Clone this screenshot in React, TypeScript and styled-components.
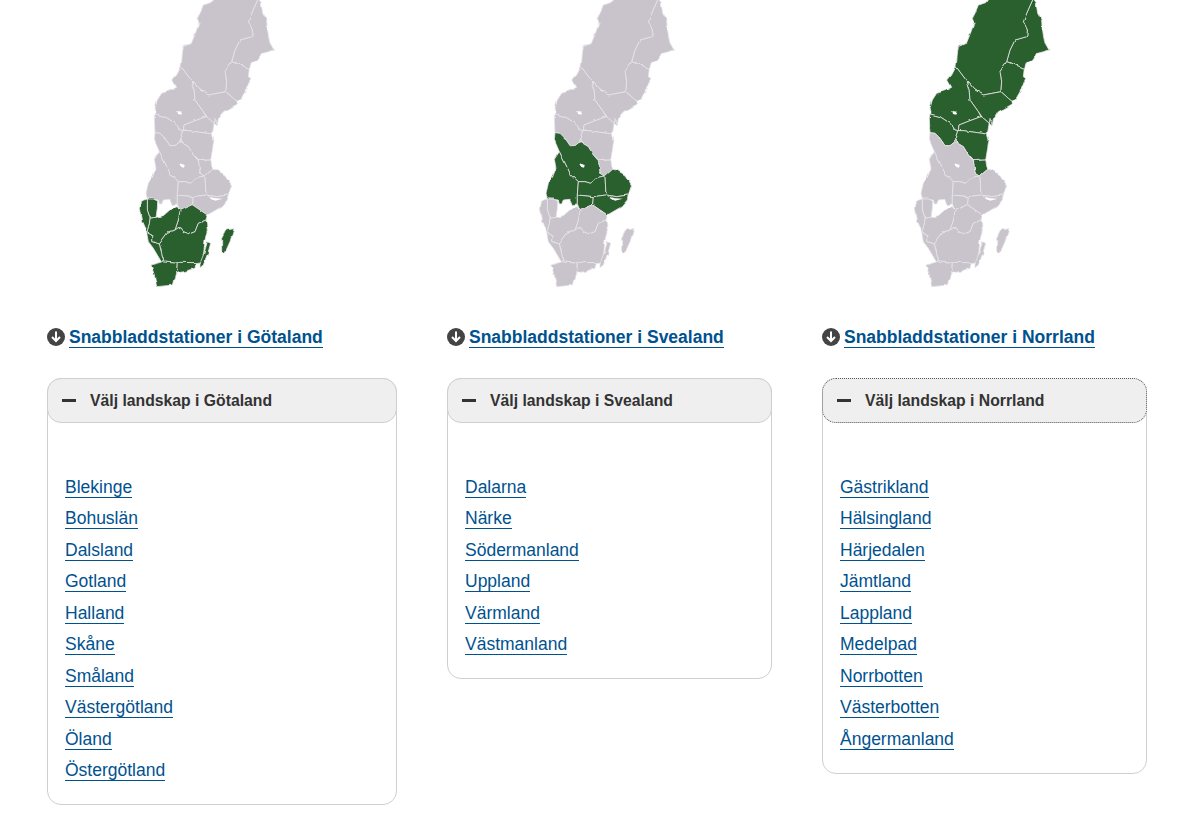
import React from "react";
import styled, { createGlobalStyle } from "styled-components";

type Group = "g" | "s" | "n";

const GlobalStyle = createGlobalStyle`
  html, body { margin: 0; padding: 0; background: #fff; }
  body { font-family: "Liberation Sans", Arial, sans-serif; }
`;

const Page = styled.main`
  display: flex;
  align-items: flex-start;
  gap: 50px;
  padding: 0 0 10px 47px;
`;

const Column = styled.section<{ $width: number }>`
  width: ${(p) => p.$width}px;
  flex: none;
`;

const MapSvg = styled.svg<{ $shift: number }>`
  display: block;
  width: 160px;
  height: 295px;
  margin-left: ${(p) => p.$shift}px;
`;

const Heading = styled.h2`
  display: flex;
  align-items: center;
  gap: 4px;
  margin: 27px 0 0;
  height: 30px;
  font-size: 17.5px;
  font-weight: 700;
  line-height: 30px;
`;

const HeadingLink = styled.a`
  color: #00528f;
  text-decoration: none;
  border-bottom: 1px solid #00528f;
  line-height: 20px;
`;

const Panel = styled.div`
  margin-top: 26px;
  border: 1px solid #cfcfcf;
  border-radius: 14px;
  background: #fff;
`;

const PanelHeader = styled.div<{ $focused?: boolean }>`
  display: flex;
  align-items: center;
  gap: 14px;
  box-sizing: border-box;
  height: 45px;
  margin: -1px;
  padding-left: 14px;
  background: #efefef;
  border: 1px solid #cfcfcf;
  border-radius: 14px;
  font-size: 15.75px;
  font-weight: 700;
  color: #333;
  ${(p) => (p.$focused ? "border: 1px dotted #555;" : "")}
`;

const Minus = styled.span`
  display: block;
  width: 14px;
  height: 3px;
  background: #333;
`;

const LinkList = styled.ul`
  list-style: none;
  margin: 0;
  padding: 49.5px 17px 17.5px;
`;

const LinkItem = styled.li`
  height: 31.5px;
  line-height: 31.5px;
  font-size: 17.5px;
`;

const PlainLink = styled.a`
  color: #00528f;
  text-decoration: none;
  border-bottom: 1px solid #00528f;
`;

const regions: { g: Group; p: string }[] = [
  // Norrbotten
  { g: "n", p: "415,-5 423,8 428,40 440,62 442,85 448,125 462,150 425,160 412,180 395,185 388,205 335,185 345,150 360,120 395,110 397,90 385,65 395,40" },
  // Lappland
  { g: "n", p: "283,-5 415,-5 395,40 385,65 397,90 395,110 360,120 345,150 335,185 315,215 320,240 318,275 265,285 240,270 213,240 183,200 187,165 190,140 215,128 228,95 237,70 232,55 240,40 250,15 275,8" },
  // Västerbotten
  { g: "n", p: "335,185 388,205 385,230 392,235 378,270 362,298 352,305 340,295 318,275 320,240 315,215" },
  // Ångermanland
  { g: "n", p: "213,240 240,270 265,285 318,275 340,295 352,305 352,312 330,325 310,335 295,360 292,378 262,352 250,335 225,300 222,270" },
  // Jämtland
  { g: "n", p: "183,200 213,240 222,270 225,300 250,335 258,350 225,362 192,375 190,392 180,390 165,370 135,350 105,342 108,340 105,325 112,300 125,280 150,272 170,262 158,240 170,225" },
  // Medelpad
  { g: "n", p: "192,375 225,362 258,350 262,352 292,378 285,355 280,385 277,402 240,397 205,392 190,392" },
  // Härjedalen
  { g: "n", p: "105,342 135,350 165,370 180,390 190,392 190,397 180,425 165,437 150,437 135,415 120,400 105,398 103,355" },
  // Hälsingland
  { g: "n", p: "190,397 190,392 205,392 240,397 277,402 282,420 278,445 272,480 235,482 220,465 205,440 180,425" },
  // Gästrikland
  { g: "n", p: "235,482 272,480 278,508 255,528 240,518" },
  // Dalarna
  { g: "s", p: "105,398 120,400 135,415 150,437 165,437 180,425 205,440 220,465 235,482 240,518 255,528 225,535 212,550 195,545 175,545 150,520 118,455 103,420" },
  // Värmland
  { g: "s", p: "118,455 150,520 175,545 172,585 172,612 157,614 150,598 130,600 125,612 118,612 115,600 82,597 78,580 85,550 98,530 108,505 103,478" },
  // Västmanland
  { g: "s", p: "175,545 195,545 212,550 225,535 255,528 258,585 220,590 172,585" },
  // Uppland
  { g: "s", p: "255,528 278,508 290,510 315,525 335,555 325,585 290,590 258,585" },
  // Närke
  { g: "s", p: "172,585 220,590 218,615 195,625 180,632 172,612" },
  // Södermanland
  { g: "s", p: "220,590 258,585 290,590 325,585 322,600 305,620 262,645 240,630 218,615" },
  // Östergötland
  { g: "g", p: "218,615 240,630 262,645 258,660 235,670 225,695 208,702 190,695 180,680 165,690 175,660 180,632 195,625" },
  // Småland
  { g: "g", p: "165,690 180,680 190,695 208,702 225,695 235,670 258,660 262,690 255,720 250,770 247,785 228,788 172,787 132,783 125,760 118,732 145,695" },
  // Västergötland
  { g: "g", p: "172,620 180,632 175,660 165,690 145,695 118,732 95,725 95,705 80,698 88,670 90,654 108,652 130,647 155,625" },
  // Dalsland
  { g: "g", p: "82,597 100,597 113,603 112,625 108,652 90,654 82,630" },
  // Bohuslän
  { g: "g", p: "62,603 82,597 82,630 90,654 88,670 80,698 65,665 58,625" },
  // Halland
  { g: "g", p: "80,698 95,705 95,725 118,732 125,760 132,783 125,787 100,745 85,725" },
  // Skåne
  { g: "g", p: "93,795 125,787 132,783 172,787 170,820 160,855 110,860 103,825" },
  // Blekinge
  { g: "g", p: "172,787 228,788 225,805 200,812 170,820" },
  // Öland
  { g: "g", p: "262,725 272,730 265,755 250,795 240,803 240,790 252,760" },
  // Gotland
  { g: "g", p: "318,690 342,686 330,725 315,758 305,750 305,715" },
];

function SwedenMap({ active, shift }: { active: Group; shift: number }) {
  const id = `rough-${active}`;
  return (
    <MapSvg $shift={shift} viewBox="0 0 480 885" aria-hidden="true">
      <defs>
        <filter id={id} x="-5%" y="-5%" width="110%" height="110%">
          <feTurbulence type="fractalNoise" baseFrequency="0.035" numOctaves="2" seed="4" result="n" />
          <feDisplacementMap in="SourceGraphic" in2="n" scale="9" xChannelSelector="R" yChannelSelector="G" />
          <feGaussianBlur stdDeviation="1.1" />
        </filter>
      </defs>
      <g filter={`url(#${id})`}>
        {regions.map((r, i) => (
          <polygon
            key={i}
            points={r.p}
            fill={r.g === active ? "#2c5e2e" : "#c9c3cc"}
            stroke="#e6e4e8"
            strokeWidth="2.4"
            strokeLinejoin="round"
          />
        ))}
        <polygon points="172,333 186,335 184,344 174,342" fill="#fff" />
        <polygon points="178,490 194,495 192,503 182,500" fill="#fff" />
        <polygon points="262,588 285,595 308,596 285,602" fill="#fff" />
      </g>
    </MapSvg>
  );
}

function DownIcon() {
  return (
    <svg width="18" height="18" viewBox="0 0 18 18" aria-hidden="true" style={{ flex: "none" }}>
      <circle cx="9" cy="9" r="9" fill="#444" />
      <path d="M9 3.5v9.5M5 9l4 4 4-4" fill="none" stroke="#fff" strokeWidth="2" />
    </svg>
  );
}

const columns = [
  {
    name: "Götaland", width: 350, group: "g" as Group, shift: 73,
    links: ["Blekinge", "Bohuslän", "Dalsland", "Gotland", "Halland", "Skåne", "Småland", "Västergötland", "Öland", "Östergötland"],
  },
  {
    name: "Svealand", width: 325, group: "s" as Group, shift: 73,
    links: ["Dalarna", "Närke", "Södermanland", "Uppland", "Värmland", "Västmanland"],
  },
  {
    name: "Norrland", width: 325, group: "n" as Group, shift: 73, focused: true,
    links: ["Gästrikland", "Hälsingland", "Härjedalen", "Jämtland", "Lappland", "Medelpad", "Norrbotten", "Västerbotten", "Ångermanland"],
  },
];

export default function App() {
  return (
    <>
      <GlobalStyle />
      <Page>
        {columns.map((c) => (
          <Column key={c.name} $width={c.width}>
            <SwedenMap active={c.group} shift={c.shift} />
            <Heading>
              <DownIcon />
              <HeadingLink href="#">Snabbladdstationer i {c.name}</HeadingLink>
            </Heading>
            <Panel>
              <PanelHeader $focused={c.focused}>
                <Minus />
                Välj landskap i {c.name}
              </PanelHeader>
              <LinkList>
                {c.links.map((l) => (
                  <LinkItem key={l}>
                    <PlainLink href="#">{l}</PlainLink>
                  </LinkItem>
                ))}
              </LinkList>
            </Panel>
          </Column>
        ))}
      </Page>
    </>
  );
}
